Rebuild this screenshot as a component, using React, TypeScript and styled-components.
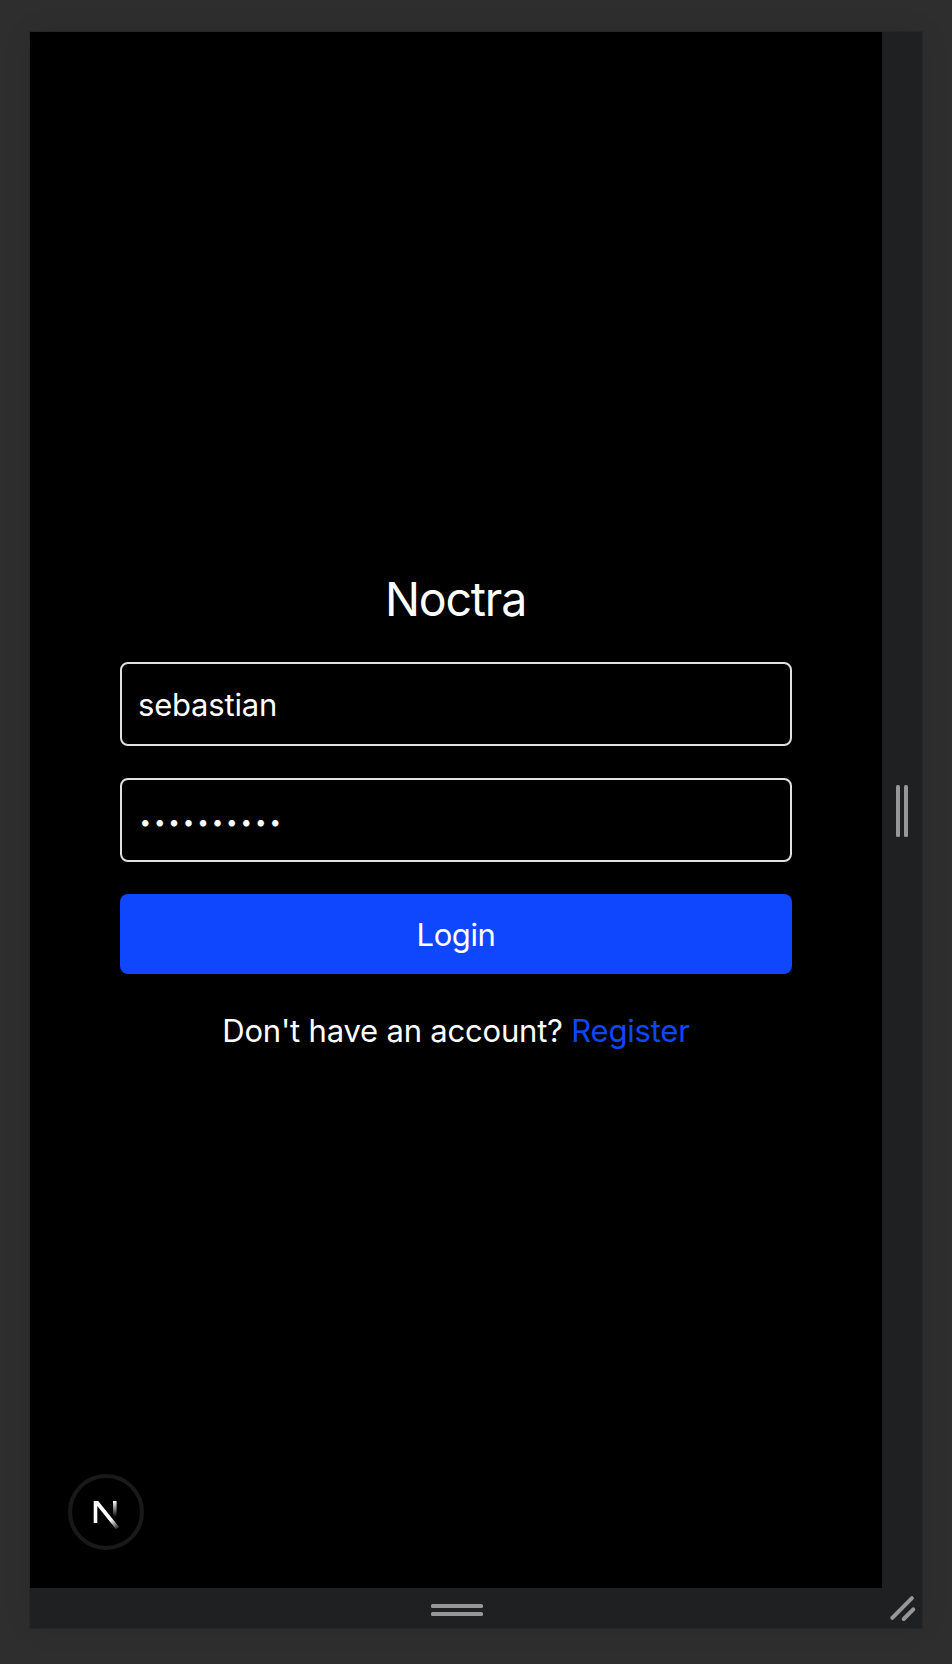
import React, { useState } from "react";
import styled, { createGlobalStyle } from "styled-components";

const GlobalStyle = createGlobalStyle`
  *, *::before, *::after { box-sizing: border-box; }
  body {
    margin: 0;
    background: #2e2e2e;
    font-family: Inter, "Liberation Sans", sans-serif;
    -webkit-font-smoothing: antialiased;
  }
`;

const Workspace = styled.div`
  height: 1664px;
  padding: 32px 30px 36px;
  overflow: hidden;
`;

const Device = styled.div`
  display: grid;
  grid-template-columns: 852px 40px;
  grid-template-rows: 1556px 40px;
  width: 892px;
  box-shadow: 0 0 0 1px #272727, 0 0 28px rgba(0, 0, 0, 0.08);
`;

const Screen = styled.main`
  position: relative;
  background: #000;
  padding: 530px 90px 0;
  color: #fff;
`;

const Handle = styled.div<{ $vertical?: boolean }>`
  display: flex;
  flex-direction: ${(p) => (p.$vertical ? "row" : "column")};
  align-items: center;
  justify-content: center;
  gap: 4px;
  padding: ${(p) => (p.$vertical ? "2px 0 0" : "4px 0 0 2px")};
  background: #1e2022;
`;

const Grip = styled.span<{ $vertical?: boolean }>`
  width: ${(p) => (p.$vertical ? 4 : 52)}px;
  height: ${(p) => (p.$vertical ? 52 : 4)}px;
  border-radius: 1.5px;
  background: #979797;
`;

const Corner = styled.div`
  background: #1e2022;
  svg { display: block; }
`;

const Form = styled.form`
  display: flex;
  flex-direction: column;
  gap: 32px;
`;

const Title = styled.h1`
  margin: 0;
  height: 68px;
  padding-right: 1px;
  font-size: 46.5px;
  line-height: 74px;
  font-weight: 400;
  letter-spacing: -1.2px;
  text-align: center;
`;

const Field = styled.input<{ $masked?: boolean }>`
  width: 100%;
  height: 84px;
  padding: ${(p) => (p.$masked ? "2px 16px 0 17.5px" : "0 16px")};
  border: 2px solid #e1e1e1;
  border-radius: 8px;
  background: transparent;
  color: #fff;
  outline: none;
  font: 400 ${(p) => (p.$masked ? "20.5px" : "31px")} Inter, "Liberation Sans", sans-serif;
  letter-spacing: ${(p) => (p.$masked ? "2.9px" : "-0.2px")};
`;

const Submit = styled.button`
  height: 80px;
  padding: 0;
  border: 0;
  border-radius: 8px;
  background: #0f47ff;
  color: #fff;
  font: 400 31px Inter, "Liberation Sans", sans-serif;
  letter-spacing: -0.4px;
`;

const Prompt = styled.p`
  margin: 0;
  font-size: 31px;
  line-height: 50px;
  font-weight: 400;
  letter-spacing: -0.2px;
  text-align: center;
  white-space: nowrap;
`;

const RegisterLink = styled.a`
  color: #0f47ff;
  text-decoration: none;
`;

const Badge = styled.div`
  position: absolute;
  left: 38px;
  bottom: 38px;
  width: 76px;
  height: 76px;
  border: 4px solid #191919;
  border-radius: 50%;
  svg { display: block; }
`;

function NextMark() {
  return (
    <svg width="68" height="68" viewBox="0 0 68 68" fill="none">
      <defs>
        <linearGradient id="diagonal" x1="40" y1="41" x2="48" y2="51" gradientUnits="userSpaceOnUse">
          <stop stopColor="#fff" />
          <stop offset="1" stopColor="#fff" stopOpacity="0" />
        </linearGradient>
        <linearGradient id="stem" x1="0" y1="23" x2="0" y2="39" gradientUnits="userSpaceOnUse">
          <stop stopColor="#fff" />
          <stop offset="1" stopColor="#fff" stopOpacity="0" />
        </linearGradient>
      </defs>
      <path d="M21.7 45V23H26.2L47.2 49.2L44 51.2L25.3 28V45Z" fill="url(#diagonal)" />
      <rect x="41" y="23" width="3.6" height="17" fill="url(#stem)" />
    </svg>
  );
}

export default function App() {
  const [username, setUsername] = useState("sebastian");
  const [password, setPassword] = useState("moonlight1");

  return (
    <>
      <GlobalStyle />
      <Workspace>
        <Device>
          <Screen>
            <Form onSubmit={(e) => e.preventDefault()}>
              <Title>Noctra</Title>
              <Field value={username} onChange={(e) => setUsername(e.target.value)} aria-label="Username" />
              <Field
                $masked
                type="password"
                value={password}
                onChange={(e) => setPassword(e.target.value)}
                aria-label="Password"
              />
              <Submit type="submit">Login</Submit>
              <Prompt>
                Don't have an account? <RegisterLink href="#register">Register</RegisterLink>
              </Prompt>
            </Form>
            <Badge>
              <NextMark />
            </Badge>
          </Screen>
          <Handle $vertical>
            <Grip $vertical />
            <Grip $vertical />
          </Handle>
          <Handle>
            <Grip />
            <Grip />
          </Handle>
          <Corner>
            <svg width="40" height="40" viewBox="0 0 40 40" stroke="#979797" strokeWidth="4" strokeLinecap="round">
              <path d="M10.3 29.8L29.9 10.2M21.7 31L31.3 21.3" />
            </svg>
          </Corner>
        </Device>
      </Workspace>
    </>
  );
}
